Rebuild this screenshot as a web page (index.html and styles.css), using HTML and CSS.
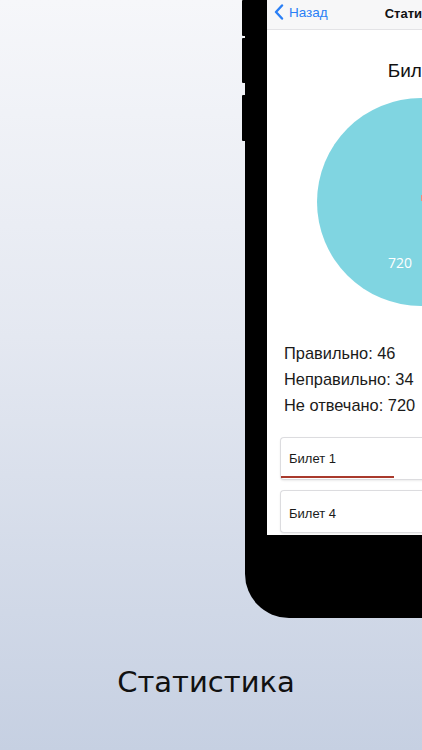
FILE: index.html
```html
<!DOCTYPE html>
<html lang="ru">
<head>
<meta charset="utf-8">
<title>Статистика</title>
<link rel="stylesheet" href="styles.css">
</head>
<body>
<div class="page">
  <div class="stage">
    <div class="buttons">
      <span class="btn btn-a"></span>
      <span class="btn btn-b"></span>
      <span class="btn btn-c"></span>
    </div>
    <div class="phone">
      <div class="screen">
        <div class="nav">
          <div class="back">
            <svg class="chev" width="10" height="16" viewBox="0 0 10 16"><path d="M8 1.5 L2 8 L8 14.5" fill="none" stroke="#2a7ff6" stroke-width="2.4" stroke-linecap="round" stroke-linejoin="round"/></svg>
            <span>Назад</span>
          </div>
          <div class="nav-title">Статистика</div>
        </div>
        <div class="title">Билеты</div>
        <div class="pie-wrap">
          <div class="pie">
            <span class="pie-label">720</span>
          </div>
        </div>
        <div class="stats">
          <div>Правильно: 46</div>
          <div>Неправильно: 34</div>
          <div>Не отвечано: 720</div>
        </div>
        <div class="cards">
          <div class="card">
            <div class="card-name">Билет 1</div>
            <div class="bar"><div class="bar-fill" style="width:113px"></div></div>
          </div>
          <div class="card">
            <div class="card-name">Билет 4</div>
          </div>
        </div>
      </div>
    </div>
  </div>
  <div class="caption">Статистика</div>
</div>
</body>
</html>
```

FILE: styles.css
```css
html, body {
  margin: 0;
  padding: 0;
}
body {
  width: 422px;
  height: 750px;
  overflow: hidden;
  font-family: "Liberation Sans", Arial, sans-serif;
}
.page {
  width: 422px;
  height: 750px;
  overflow: hidden;
  background: linear-gradient(to bottom, #f6f7fa 0%, #e4e8f1 45%, #c6d0e2 100%);
  display: flex;
  flex-direction: column;
}
.stage {
  display: flex;
  padding-left: 242px;
  width: 600px;
}
.buttons {
  width: 4px;
  display: flex;
  flex-direction: column;
  flex: none;
}
.btn {
  display: block;
  background: #000;
  width: 4px;
  border-radius: 1px;
}
.btn-a { height: 36px; }
.btn-b { height: 45px; margin-top: 2px; }
.btn-c { height: 46px; margin-top: 12px; }
.phone {
  flex: none;
  margin-left: -1px;
  background: #000;
  padding: 0 22px 83px 22px;
  border-radius: 0 0 44px 44px;
}
.screen {
  width: 308px;
  height: 535px;
  background: #fff;
  overflow: hidden;
  display: flex;
  flex-direction: column;
}
.nav {
  height: 29px;
  flex: none;
  background: #f7f7f8;
  border-bottom: 1px solid #e3e3e6;
  display: flex;
  align-items: center;
  position: relative;
  justify-content: center;
}
.back {
  position: absolute;
  left: 7px;
  top: 4px;
  display: flex;
  align-items: center;
  gap: 5px;
  color: #2a7ff6;
  font-size: 13.5px;
}
.chev { display: block; }
.nav-title {
  font-weight: bold;
  font-size: 13px;
  color: #111;
  margin-top: -2px;
}
.title {
  margin-top: 29px;
  text-align: center;
  font-size: 19px;
  line-height: 24px;
  color: #111;
}
.pie-wrap {
  margin-top: 15px;
  display: flex;
  justify-content: center;
}
.pie {
  width: 208px;
  height: 208px;
  border-radius: 50%;
  background: conic-gradient(from 4deg, #f28b7f 0 15deg, #8fd18c 15deg 32deg, #80d5e1 32deg 360deg);
  position: relative;
}
.pie-label {
  position: absolute;
  left: 71px;
  top: 155px;
  color: #fff;
  font-family: "Open Sans", sans-serif;
  font-size: 14px;
}
.stats {
  margin-top: 34px;
  padding-left: 17px;
  font-size: 16.4px;
  line-height: 26px;
  color: #1a1a1a;
}
.cards {
  margin-top: 19px;
  padding-left: 13px;
  display: flex;
  flex-direction: column;
  gap: 10px;
}
.card {
  width: 300px;
  height: 43px;
  border: 1px solid #dcdcdf;
  border-right: none;
  border-radius: 4px 0 0 4px;
  box-shadow: 0 1px 2px rgba(0,0,0,0.08);
  display: flex;
  flex-direction: column;
  box-sizing: border-box;
  background: #fff;
}
.card-name {
  flex: 1;
  display: flex;
  align-items: center;
  padding-left: 8px;
  padding-top: 3px;
  font-size: 13px;
  color: #1a1a1a;
}
.bar {
  height: 2px;
  margin-bottom: 1px;
}
.bar-fill {
  height: 2px;
  background: #a93a2c;
}
.caption {
  margin-top: 44px;
  text-align: center;
  padding-right: 10px;
  font-family: "DejaVu Sans", sans-serif;
  font-size: 29px;
  color: #111;
  line-height: 40px;
}
```
